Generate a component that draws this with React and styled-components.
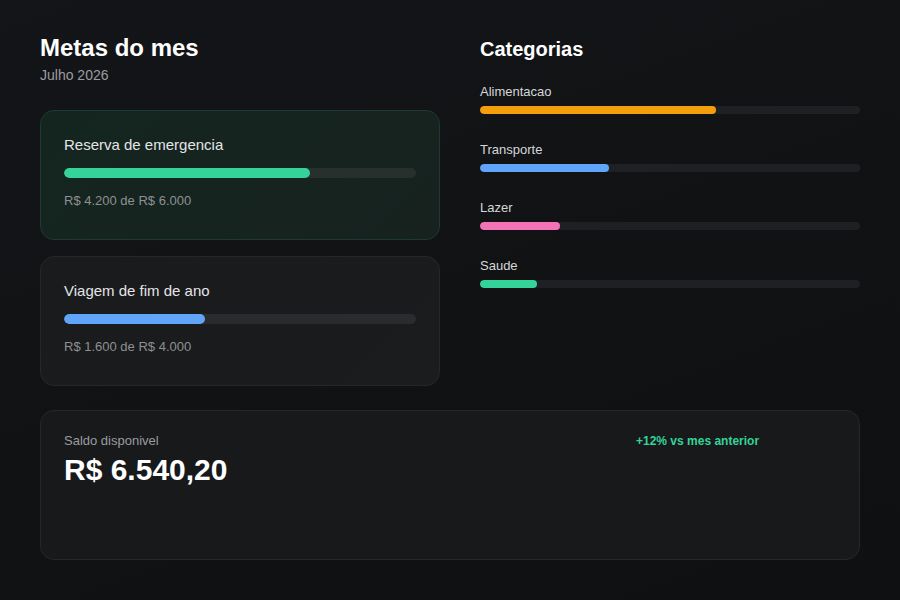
import React from "react"
import styled, { createGlobalStyle } from "styled-components"

const goals = [
  { name: "Reserva de emergencia", pct: 70, color: "#34d399", text: "R$ 4.200 de R$ 6.000", active: true },
  { name: "Viagem de fim de ano", pct: 40, color: "#60a5fa", text: "R$ 1.600 de R$ 4.000" },
]

const categories = [
  { name: "Alimentacao", pct: 62, color: "#f59e0b" },
  { name: "Transporte", pct: 34, color: "#60a5fa" },
  { name: "Lazer", pct: 21, color: "#f472b6" },
  { name: "Saude", pct: 15, color: "#34d399" },
]

const App = () => (
  <>
    <GlobalStyle />
    <Page>
      <Top>
        <Column>
          <Title>Metas do mes</Title>
          <Subtitle>Julho 2026</Subtitle>
          <GoalList>
            {goals.map((g) => (
              <GoalCard key={g.name} $active={g.active}>
                <GoalName>{g.name}</GoalName>
                <Track $h={10} $gap={14} $bg={g.active ? "#27302d" : "#2a2b2e"}>
                  <Fill style={{ width: `${g.pct}%` }} $color={g.color} />
                </Track>
                <GoalAmount>{g.text}</GoalAmount>
              </GoalCard>
            ))}
          </GoalList>
        </Column>
        <Column>
          <SideTitle>Categorias</SideTitle>
          <CategoryList>
            {categories.map((c) => (
              <div key={c.name}>
                <CategoryName>{c.name}</CategoryName>
                <Track $h={8} $gap={6} $bg="#1f2023">
                  <Fill style={{ width: `${c.pct}%` }} $color={c.color} />
                </Track>
              </div>
            ))}
          </CategoryList>
        </Column>
      </Top>
      <BalanceCard>
        <div>
          <BalanceLabel>Saldo disponivel</BalanceLabel>
          <BalanceValue>R$ 6.540,20</BalanceValue>
        </div>
        <Trend>+12% vs mes anterior</Trend>
      </BalanceCard>
    </Page>
  </>
)

export default App

// styles
const GlobalStyle = createGlobalStyle`
  html, body {
    margin: 0;
    background: #111214;
  }
  body {
    font-family: "Liberation Sans", Arial, sans-serif;
    color: #fff;
  }
`

const Page = styled.div`
  width: 900px;
  height: 600px;
  box-sizing: border-box;
  padding: 33px 40px 40px;
  background: linear-gradient(160deg, #141518 0%, #111214 50%, #0f1012 100%);
`

const Top = styled.div`
  display: grid;
  grid-template-columns: 400px 1fr;
  column-gap: 40px;
`

const Column = styled.div`
  display: flex;
  flex-direction: column;
`

const Title = styled.h1`
  margin: 0;
  font-size: 24px;
  line-height: 30px;
  font-weight: bold;
  color: #fff;
`

const Subtitle = styled.div`
  margin-top: 4px;
  font-size: 14px;
  line-height: 17px;
  color: #9b9ca0;
`

const GoalList = styled.div`
  display: flex;
  flex-direction: column;
  gap: 16px;
  margin-top: 26px;
`

const GoalCard = styled.div`
  height: 130px;
  box-sizing: border-box;
  padding: 25px 23px;
  border-radius: 14px;
  border: 1px solid ${(p) => (p.$active ? "#1f3a30" : "#26272a")};
  background: ${(p) =>
    p.$active
      ? "linear-gradient(135deg, #14251f 0%, #17221f 100%)"
      : "linear-gradient(135deg, #1a1b1d 0%, #1b1c1e 100%)"};
`

const GoalName = styled.div`
  font-size: 15px;
  line-height: 18px;
  color: #e4e5e7;
`

const Track = styled.div`
  margin-top: ${(p) => p.$gap}px;
  height: ${(p) => p.$h}px;
  border-radius: ${(p) => p.$h / 2}px;
  background: ${(p) => p.$bg};
  overflow: hidden;
`

const Fill = styled.div`
  height: 100%;
  border-radius: inherit;
  background: ${(p) => p.$color};
`

const GoalAmount = styled.div`
  margin-top: 15px;
  font-size: 13px;
  line-height: 16px;
  color: #8e9094;
`

const SideTitle = styled.h2`
  margin: 4px 0 0;
  font-size: 20px;
  line-height: 24px;
  font-weight: bold;
  color: #fff;
`

const CategoryList = styled.div`
  display: flex;
  flex-direction: column;
  gap: 28px;
  margin-top: 23px;
`

const CategoryName = styled.div`
  font-size: 13px;
  line-height: 16px;
  color: #d6d7d9;
`

const BalanceCard = styled.div`
  margin-top: 24px;
  height: 150px;
  box-sizing: border-box;
  padding: 22px 23px;
  display: flex;
  justify-content: space-between;
  align-items: flex-start;
  border-radius: 14px;
  border: 1px solid #26272a;
  background: linear-gradient(135deg, #18191b 0%, #17191b 100%);
`

const BalanceLabel = styled.div`
  font-size: 13px;
  line-height: 16px;
  color: #9b9ca0;
`

const BalanceValue = styled.div`
  margin-top: 4px;
  font-size: 30px;
  line-height: 34px;
  font-weight: bold;
  color: #fff;
`

const Trend = styled.div`
  width: 200px;
  font-size: 12px;
  line-height: 16px;
  font-weight: bold;
  color: #34d399;
`
